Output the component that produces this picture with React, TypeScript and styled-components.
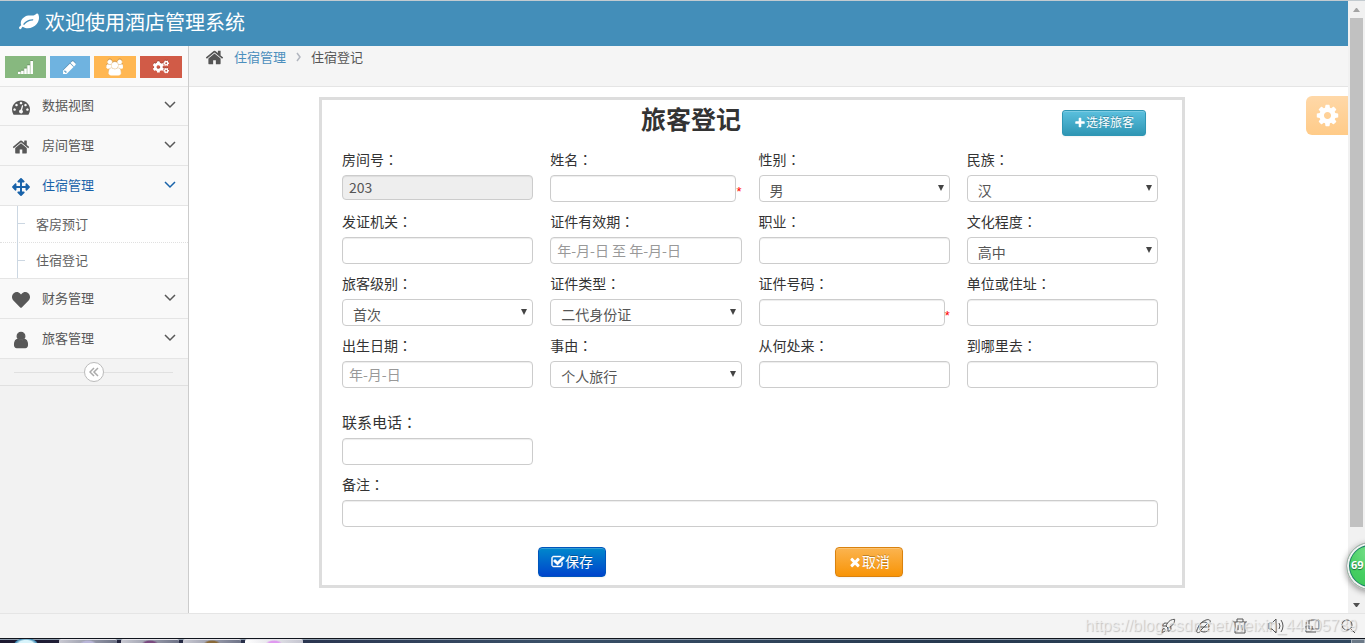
import React from "react";
import styled, { createGlobalStyle, css } from "styled-components";
import { FaCogs, FaArrowsAlt, FaHeart } from "react-icons/fa";
import { Rocket } from "lucide-react";

const sans = `"Noto Sans CJK SC", "Open Sans", sans-serif`;

const GlobalStyle = createGlobalStyle`
  *, *::before, *::after { box-sizing: border-box; }
  body {
    margin: 0;
    font-family: ${sans};
    font-size: 13px;
    line-height: 20px;
    color: #393939;
    background: #fff;
  }
  button, input, select { font-family: inherit; margin: 0; }
  a { text-decoration: none; }
  ul, ol { list-style: none; margin: 0; padding: 0; }
  svg { display: block; flex: none; }
`;

/* ---------- icons ---------- */

const paths = {
  leaf: "M1280 704q0-26-19-45t-45-19q-172 0-318 49.5t-259.5 134-235.5 219.5q-19 21-19 45 0 26 19 45t45 19q24 0 45-19 27-24 74-71t67-66q137-124 268.5-176t313.5-52q26 0 45-19t19-45zm512-198q0 95-20 193-46 224-184.5 383t-357.5 268q-214 108-438 108-148 0-286-47-15-5-88-42t-96-37q-16 0-39.5 32t-45 70-52.5 70-60 32q-43 0-63.5-17.5t-45.5-59.5q-2-4-6-11t-5.5-10-3-9.5-1.5-13.5q0-35 31-73.5t68-65.5 68-56 31-48q0-4-14-38t-16-44q-9-51-9-104 0-115 43.5-220t119-184.5 170.5-139 204-95.5q55-18 145-25.5t179.5-9 178.5-6 163.5-24 113.5-56.5l29.5-29.5 29.5-28 27-20 36.5-16 43.5-4.5q39 0 70.5 46t47.5 112 24 124 8 96z",
  home: "M1472 992v480q0 26-19 45t-45 19h-384v-384h-256v384h-384q-26 0-45-19t-19-45v-480q0-1 .5-3t.5-3l575-474 575 474q1 2 1 6zm223-69l-62 74q-8 9-21 11h-3q-13 0-21-7l-692-577-692 577q-12 8-24 7-13-2-21-11l-62-74q-8-10-7-23.5t11-21.5l719-599q32-26 76-26t76 26l244 204v-195q0-14 9-23t23-9h192q14 0 23 9t9 23v408l219 182q10 8 11 21.5t-7 23.5z",
  signal: "M0 1408h310v256h-310zM370 1280h310v384h-310zM740 1024h310v640h-310zM1110 640h310v1024h-310zM1480 128h310v1536h-310z",
  pencil: "M491 1536l91-91-235-235-91 91v107h128v128h107zM960 416l416 416-832 832h-416v-416zm683 96q0 53-37 90l-166 166-416-416 166-165q36-38 90-38 53 0 91 38l235 234q37 39 37 91z",
  group: "M657 896q-162 5-265 128h-134q-82 0-138-40.5t-56-118.5q0-353 124-353 6 0 43.5 21t97.5 42.5 119 21.5q67 0 133-23-5 37-5 66 0 139 81 256zm1071 637q0 120-73 189.5t-194 69.5h-874q-121 0-194-69.5t-73-189.5q0-53 3.5-103.5t14-109 26.5-108.5 43-97.5 62-81 85.5-53.5 111.5-20q10 0 43 21.5t73 48 107 48 135 21.5 135-21.5 107-48 73-48 43-21.5q61 0 111.5 20t85.5 53.5 62 81 43 97.5 26.5 108.5 14 109 3.5 103.5zm-1024-1277q0 106-75 181t-181 75-181-75-75-181 75-181 181-75 181 75 75 181zm704 384q0 159-112.5 271.5t-271.5 112.5-271.5-112.5-112.5-271.5 112.5-271.5 271.5-112.5 271.5 112.5 112.5 271.5zm576 225q0 78-56 118.5t-138 40.5h-134q-103-123-265-128 81-117 81-256 0-29-5-66 66 23 133 23 59 0 119-21.5t97.5-42.5 43.5-21q124 0 124 353zm-128-609q0 106-75 181t-181 75-181-75-75-181 75-181 181-75 181 75 75 181z",
  dashboard: "M384 1152q0-53-37.5-90.5t-90.5-37.5-90.5 37.5-37.5 90.5 37.5 90.5 90.5 37.5 90.5-37.5 37.5-90.5zm192-448q0-53-37.5-90.5t-90.5-37.5-90.5 37.5-37.5 90.5 37.5 90.5 90.5 37.5 90.5-37.5 37.5-90.5zm428 481l101-382q6-26-7.5-48.5t-38.5-29.5-48 6.5-30 39.5l-101 382q-60 5-107 43.5t-63 98.5q-20 77 20 146t117 89 146-20 89-117q16-60-6-117t-72-91zm660-33q0-53-37.5-90.5t-90.5-37.5-90.5 37.5-37.5 90.5 37.5 90.5 90.5 37.5 90.5-37.5 37.5-90.5zm-640-640q0-53-37.5-90.5t-90.5-37.5-90.5 37.5-37.5 90.5 37.5 90.5 90.5 37.5 90.5-37.5 37.5-90.5zm448 192q0-53-37.5-90.5t-90.5-37.5-90.5 37.5-37.5 90.5 37.5 90.5 90.5 37.5 90.5-37.5 37.5-90.5zm320 448q0 261-141 483-19 29-54 29h-1402q-35 0-54-29-141-221-141-483 0-182 71-348t191-286 286-191 348-71 348 71 286 191 191 286 71 348z",
  user: "M1536 1399q0 109-62.5 187t-150.5 78h-854q-88 0-150.5-78t-62.5-187q0-85 8.5-160.5t31.5-152 58.5-131 94-89 134.5-34.5q131 128 313 128t313-128q76 0 134.5 34.5t94 89 58.5 131 31.5 152 8.5 160.5zm-256-887q0 159-112.5 271.5t-271.5 112.5-271.5-112.5-112.5-271.5 112.5-271.5 271.5-112.5 271.5 112.5 112.5 271.5z",
  cog: "M1152 896q0-106-75-181t-181-75-181 75-75 181 75 181 181 75 181-75 75-181zm512-109v222q0 12-8 23t-20 13l-185 28q-19 54-39 91 35 50 107 138 10 12 10 25t-9 23q-27 37-99 108t-94 71q-12 0-26-9l-138-108q-44 23-91 38-16 136-29 186-7 28-36 28h-222q-14 0-24.5-8.5t-11.5-21.5l-28-184q-49-16-90-37l-141 107q-10 9-25 9-14 0-25-11-126-114-165-168-7-10-7-23 0-12 8-23 15-21 51-66.5t54-70.5q-27-50-41-99l-183-27q-13-2-21-12.5t-8-23.5v-222q0-12 8-23t19-13l186-28q14-46 39-92-40-57-107-138-10-12-10-24 0-10 9-23 26-36 98.5-107.5t94.5-71.5q13 0 26 10l138 107q44-23 91-38 16-136 29-186 7-28 36-28h222q14 0 24.5 8.5t11.5 21.5l28 184q49 16 90 37l142-107q9-9 24-9 13 0 25 10 129 119 165 170 7 8 7 22 0 12-8 23-15 21-51 66.5t-54 70.5q26 50 41 98l183 28q13 2 21 12.5t8 23.5z",
  check: "M1472 930v318q0 119-84.5 203.5t-203.5 84.5h-832q-119 0-203.5-84.5t-84.5-203.5v-832q0-119 84.5-203.5t203.5-84.5h832q63 0 117 25 15 7 18 23 3 17-9 29l-49 49q-10 10-23 10-3 0-9-2-23-6-45-6h-832q-66 0-113 47t-47 113v832q0 66 47 113t113 47h832q66 0 113-47t47-113v-254q0-13 9-22l64-64q10-10 23-10 6 0 12 3 20 8 20 29zm231-489l-814 814q-24 24-57 24t-57-24l-430-430q-24-24-24-57t24-57l110-110q24-24 57-24t57 24l263 263 647-647q24-24 57-24t57 24l110 110q24 24 24 57t-24 57z",
  plus: "M1600 736v192q0 40-28 68t-68 28h-416v416q0 40-28 68t-68 28h-192q-40 0-68-28t-28-68v-416h-416q-40 0-68-28t-28-68v-192q0-40 28-68t68-28h416v-416q0-40 28-68t68-28h192q40 0 68 28t28 68v416h416q40 0 68 28t28 68z",
  times: "M1490 1322q0 40-28 68l-136 136q-28 28-68 28t-68-28l-294-294-294 294q-28 28-68 28t-68-28l-136-136q-28-28-28-68t28-68l294-294-294-294q-28-28-28-68t28-68l136-136q28-28 68-28t68 28l294 294 294-294q28-28 68-28t68 28l136 136q28 28 28 68t-28 68l-294 294 294 294q28 28 28 68z",
};

type GlyphProps = { name: keyof typeof paths; size: number; box?: number; outline?: number };

function Glyph({ name, size, box = 1792, outline = 0 }: GlyphProps) {
  return (
    <svg
      width={size}
      height={size}
      viewBox={`0 0 ${box} 1792`}
      fill="currentColor"
      stroke={outline ? "currentColor" : "none"}
      strokeWidth={outline}
      aria-hidden="true"
    >
      <path d={paths[name]} />
    </svg>
  );
}

function Chevron({ d, width, height }: { d: string; width: number; height: number }) {
  return (
    <svg
      width={width}
      height={height}
      viewBox={`0 0 ${width} ${height}`}
      fill="none"
      stroke="currentColor"
      strokeWidth="1.5"
      aria-hidden="true"
    >
      <path d={d} />
    </svg>
  );
}

/* ---------- window frame ---------- */

const Screen = styled.div`
  position: relative;
  display: flex;
  flex-direction: column;
  min-height: 100vh;
  overflow: hidden;
  border-top: 1px solid #c3cbd0;
`;

const Viewport = styled.div`
  flex: 1;
  display: flex;
`;

const Site = styled.div`
  position: relative;
  flex: 1;
  display: flex;
  flex-direction: column;
`;

const ScrollTrack = styled.div`
  width: 17px;
  display: flex;
  flex-direction: column;
  align-items: center;
  background: #f1f1f1;
`;

const ScrollEnd = styled.div`
  height: 17px;
  display: flex;
  align-items: center;
`;

const ScrollSpace = styled.div`
  flex: 1;
  width: 13px;
`;

const ScrollThumb = styled.div`
  height: 88%;
  background: #c1c1c1;
`;

const Navbar = styled.header`
  height: 45px;
  display: flex;
  align-items: center;
  padding: 0 19px 4px;
  background: #438eb9;
`;

const Brand = styled.a`
  display: flex;
  align-items: center;
  gap: 6px;
  color: #fff;
  font-size: 20px;
  line-height: 30px;
`;

const Body = styled.div`
  flex: 1;
  display: flex;
`;

/* ---------- sidebar ---------- */

const Sidebar = styled.aside`
  width: 189px;
  border-right: 1px solid #ccc;
  background: #f2f2f2;
`;

const Shortcuts = styled.div`
  height: 40px;
  display: grid;
  grid-template-columns: 41fr 40fr 43fr 42fr;
  gap: 4px;
  align-items: center;
  padding: 2px 6px 0 5px;
  background: #fafafa;
`;

const Shortcut = styled.button<{ $color: string }>`
  height: 22px;
  display: flex;
  align-items: center;
  justify-content: center;
  padding: 0;
  border: 0;
  color: #fff;
  background: ${(p) => p.$color};
  svg { filter: drop-shadow(0 -1px 0 rgba(0, 0, 0, 0.2)); }
`;

const Menu = styled.ul`
  & > li:first-child > a { border-top: 1px solid #e5e5e5; }
`;

const MenuLink = styled.a<{ $active?: boolean }>`
  height: 40px;
  display: flex;
  align-items: center;
  padding: 0 12px 2px;
  border-bottom: 1px solid #e5e5e5;
  background: #f9f9f9;
  color: ${(p) => (p.$active ? "#1963aa" : "#585858")};
`;

const MenuIcon = styled.span`
  width: 18px;
  display: flex;
  justify-content: center;
  padding-top: 4px;
  margin-right: 12px;
`;

const MenuText = styled.span`
  flex: 1;
`;

const SubMenu = styled.ul`
  position: relative;
  background: #fff;
  border-bottom: 1px solid #e5e5e5;
  &::before {
    content: "";
    position: absolute;
    left: 17px;
    top: 0;
    bottom: 0;
    width: 1px;
    background: #ccd7e2;
  }
  li { height: 36px; }
  li + li { border-top: 1px dotted #e0e0e0; }
`;

const SubLink = styled.a`
  height: 100%;
  display: flex;
  align-items: center;
  padding-left: 18px;
  padding-bottom: 1px;
  color: #616161;
  &::before {
    content: "";
    width: 7px;
    height: 1px;
    margin-right: 11px;
    background: #ccd7e2;
  }
`;

const CollapseBar = styled.div`
  height: 27px;
  display: flex;
  align-items: center;
  padding: 0 15px 0 14px;
  border-bottom: 1px solid #e0e0e0;
  background: #f3f3f3;
  &::before, &::after {
    content: "";
    flex: 1;
    height: 1px;
    background: #e0e0e0;
  }
`;

const CollapseButton = styled.button`
  width: 20px;
  height: 20px;
  display: flex;
  align-items: center;
  justify-content: center;
  padding: 0;
  border: 1px solid #bbb;
  border-radius: 50%;
  color: #aaa;
  background: #fff;
`;

/* ---------- content ---------- */

const Content = styled.main`
  flex: 1;
  background: #fff;
`;

const Breadcrumb = styled.nav`
  height: 41px;
  padding: 1px 0 0 16px;
  border-bottom: 1px solid #e5e5e5;
  background: #f5f5f5;
  color: #555;
  ol, li {
    display: flex;
    align-items: center;
    gap: 10px;
  }
  a { color: #4c8fbd; }
`;

const Separator = styled.span`
  color: #b2b6bf;
`;

const SettingsButton = styled.button`
  position: absolute;
  top: 95px;
  right: 0;
  width: 42px;
  height: 39px;
  display: flex;
  align-items: center;
  justify-content: center;
  padding: 0;
  border: 0;
  border-radius: 6px 0 0 6px;
  color: #fff;
  background: linear-gradient(#ffd8a8, #ffcb88);
`;

const ContentArea = styled.div`
  padding: 10px 163px 20px 130px;
`;

const Panel = styled.form`
  padding: 0 24px 8px 20px;
  border: 3px solid #ddd;
`;

const PanelHeader = styled.div`
  height: 40px;
  display: flex;
  align-items: flex-start;
  gap: 22px;
  padding-right: 12px;
  margin-bottom: 10px;
`;

const PanelTitle = styled.h1`
  flex: 1;
  margin: 0;
  text-align: center;
  font-size: 25px;
  line-height: 36px;
  font-weight: 700;
  color: #333;
`;

const tones = {
  info: ["#5bc0de", "#2f96b4", "#2f96b4"],
  primary: ["#0088cc", "#0044cc", "#0055bb"],
  warning: ["#fbb450", "#f89406", "#d9820f"],
};

const Button = styled.button<{ $tone: keyof typeof tones; $small?: boolean }>`
  height: 30px;
  display: flex;
  align-items: center;
  justify-content: center;
  padding: 0 12px 2px;
  border: 1px solid ${(p) => tones[p.$tone][2]};
  border-radius: 4px;
  font-size: 14px;
  line-height: 20px;
  color: #fff;
  text-shadow: 0 -1px 0 rgba(0, 0, 0, 0.25);
  background: linear-gradient(${(p) => tones[p.$tone][0]}, ${(p) => tones[p.$tone][1]});
  box-shadow: inset 0 1px 0 rgba(255, 255, 255, 0.2), 0 1px 2px rgba(0, 0, 0, 0.05);
  svg { margin-top: 2px; }
  ${(p) =>
    p.$small &&
    css`
      height: 26px;
      padding: 0 11px 2px;
      margin-top: 10px;
      border-radius: 3px;
      font-size: 12px;
    `}
`;

const Fields = styled.div`
  display: grid;
  grid-template-columns: repeat(4, minmax(0, 1fr));
  gap: 10px 17px;
`;

const Field = styled.div<{ $wide?: boolean; $apart?: boolean }>`
  display: flex;
  flex-direction: column;
  gap: 7px;
  ${(p) => p.$wide && "grid-column: 1 / -1;"}
  ${(p) => p.$apart && "grid-column: 1 / 2; margin-top: 15px;"}
`;

const Label = styled.label<{ $large?: boolean }>`
  font-size: ${(p) => (p.$large ? 15 : 14)}px;
  line-height: 18px;
  color: #333;
`;

const Colon = styled.span`
  font-family: "Noto Sans CJK TC", sans-serif;
`;

const Control = styled.div`
  position: relative;
  display: flex;
  height: 27px;
`;

const inputBox = css`
  flex: 1;
  min-width: 0;
  width: 100%;
  border: 1px solid #ccc;
  border-radius: 4px;
  font-size: 14px;
  line-height: 20px;
  color: #555;
  background: #fff;
`;

const TextInput = styled.input`
  ${inputBox}
  height: 27px;
  padding: 0 6px 2px;
  box-shadow: inset 0 1px 1px rgba(0, 0, 0, 0.075);
  &::placeholder { color: #999; opacity: 1; }
  &:read-only {
    height: 25px;
    padding-bottom: 1px;
    background: #eee;
  }
`;

const SelectInput = styled.select`
  ${inputBox}
  appearance: none;
  padding: 2px 20px 0 10px;
`;

const SelectArrow = styled.svg`
  position: absolute;
  right: 6px;
  top: 10px;
  pointer-events: none;
`;

const Required = styled.span`
  align-self: flex-end;
  font-family: "Liberation Sans", sans-serif;
  font-size: 13px;
  color: #f00;
`;

const Actions = styled.div`
  display: flex;
  justify-content: center;
  gap: 229px;
  padding-right: 59px;
  margin-top: 20px;
`;

/* ---------- bottom bars ---------- */

const StatusBar = styled.footer`
  position: relative;
  height: 25px;
  display: flex;
  align-items: center;
  justify-content: flex-end;
  gap: 20px;
  padding-right: 9px;
  border-top: 1px solid #e5e5e5;
  background: #f4f4f4;
  color: #555;
`;

const ToolButton = styled.button`
  width: 16px;
  height: 16px;
  padding: 0;
  border: 0;
  color: inherit;
  background: none;
`;

const Watermark = styled.span`
  position: absolute;
  right: 8px;
  top: 2px;
  font-family: "Liberation Sans", sans-serif;
  font-size: 16px;
  color: rgba(244, 244, 244, 0.7);
  text-shadow: 1px 1px 1px rgba(0, 0, 0, 0.2);
  pointer-events: none;
`;

const Taskbar = styled.div`
  height: 5px;
  display: flex;
  gap: 4px;
  align-items: flex-end;
  border-top: 1px solid #10141c;
  background: linear-gradient(#8d9bab 0 1px, rgba(0, 0, 0, 0) 1px), linear-gradient(90deg, #1d1830, #2a3550 22%, #3a5068 40%, #26394f 70%, #31485f);
`;

const StartOrb = styled.div`
  width: 55px;
  height: 4px;
  background: radial-gradient(ellipse 12px 6px at 26px 5px, #d8f4fb 60%, #3c86b0 90%, transparent 100%);
`;

const TaskItem = styled.div<{ $tint: string; $light?: boolean }>`
  width: 58px;
  height: 4px;
  border-top: 1px solid #e4e4ea;
  border-radius: 2px 2px 0 0;
  background: radial-gradient(ellipse 8px 3px at 50% 100%, ${(p) => p.$tint} 60%, transparent 100%),
    ${(p) => (p.$light ? "linear-gradient(90deg, #fff, #c5c5d0)" : "linear-gradient(90deg, #c9c9d2, #6f7488)")};
`;

const ShowDesktop = styled.div`
  width: 14px;
  height: 4px;
  margin-left: auto;
  border: 1px solid #a9b3bd;
  border-bottom: 0;
  background: #6c7a88;
`;

const SpeedBall = styled.div`
  position: absolute;
  right: -29px;
  bottom: 53px;
  width: 48px;
  height: 48px;
  padding-left: 4px;
  border: 1px solid #b0b0b0;
  border-radius: 50%;
  font-family: "Open Sans", sans-serif;
  font-size: 11px;
  font-weight: 700;
  line-height: 44px;
  color: #fff;
  text-shadow: 0 1px 1px #1b6b3a;
  background: radial-gradient(circle at 50% 20%, #7be08c, #46cf62 50%, #3bc458);
  box-shadow: inset 0 0 0 2px #f2f2f2, inset 0 0 0 3px #1d8168, 0 2px 6px rgba(0, 0, 0, 0.4);
`;

/* ---------- data ---------- */

type FieldSpec = {
  id: string;
  label: string;
  options?: string[];
  value?: string;
  placeholder?: string;
  required?: boolean;
  wide?: boolean;
  apart?: boolean;
};

const fields: FieldSpec[] = [
  { id: "room", label: "房间号", value: "203" },
  { id: "name", label: "姓名", required: true },
  { id: "gender", label: "性别", options: ["男", "女"] },
  { id: "nation", label: "民族", options: ["汉"] },
  { id: "authority", label: "发证机关" },
  { id: "validity", label: "证件有效期", placeholder: "年-月-日 至 年-月-日" },
  { id: "job", label: "职业" },
  { id: "education", label: "文化程度", options: ["高中"] },
  { id: "level", label: "旅客级别", options: ["首次"] },
  { id: "idType", label: "证件类型", options: ["二代身份证"] },
  { id: "idNumber", label: "证件号码", required: true },
  { id: "address", label: "单位或住址" },
  { id: "birthday", label: "出生日期", placeholder: "年-月-日" },
  { id: "reason", label: "事由", options: ["个人旅行"] },
  { id: "from", label: "从何处来" },
  { id: "to", label: "到哪里去" },
  { id: "phone", label: "联系电话", apart: true },
  { id: "remark", label: "备注", wide: true },
];

const menu = [
  { text: "数据视图", icon: <Glyph name="dashboard" size={18} /> },
  { text: "房间管理", icon: <Glyph name="home" size={18} /> },
  { text: "住宿管理", icon: <FaArrowsAlt size={18} />, children: ["客房预订", "住宿登记"] },
  { text: "财务管理", icon: <FaHeart size={18} /> },
  { text: "旅客管理", icon: <Glyph name="user" size={18} outline={120} /> },
];

const toolPath = (d: string) => (
  <svg width="16" height="16" viewBox="0 0 16 16" fill="none" stroke="currentColor">
    <path d={d} />
  </svg>
);

const tools = [
  { name: "加速", icon: <Rocket size={16} strokeWidth={1.5} /> },
  { name: "浏览器", icon: toolPath("M4 9h9c0-3-2-5-5-5s-5 2-5 5 2 5 5 5c2 0 4-1 5-3M14 5c1-3-1-4-4-3-4 1-8 6-9 10-1 3 1 3 3 2M5 12l7-7") },
  { name: "清理", icon: toolPath("M1 4h14M5 4V1h6v3M3 4v11h10V4M6 7v5M10 7v5") },
  { name: "声音", icon: toolPath("M1 5h3l4-4v14l-4-4H1zM11 5q2 3 0 6M13 2q4 6 0 12") },
  { name: "窗口", icon: toolPath("M5 2h10v9H5zM2 4v10h10M8 8v3") },
  { name: "搜索", icon: toolPath("M7 2a5 5 0 1 0 0 10a5 5 0 1 0 0-10M11 11l4 4") },
];

function FormField({ spec }: { spec: FieldSpec }) {
  return (
    <Field $wide={spec.wide} $apart={spec.apart}>
      <Label htmlFor={spec.id} $large={spec.apart}>
        {spec.label}
        <Colon>：</Colon>
      </Label>
      <Control>
        {spec.options ? (
          <>
            <SelectInput id={spec.id}>
              {spec.options.map((o) => (
                <option key={o}>{o}</option>
              ))}
            </SelectInput>
            <SelectArrow width="6" height="6" viewBox="0 0 6 6" fill="#444" aria-hidden="true">
              <path d="M0 0h6L3 6z" />
            </SelectArrow>
          </>
        ) : (
          <TextInput
            id={spec.id}
            type="text"
            defaultValue={spec.value}
            placeholder={spec.placeholder}
            readOnly={Boolean(spec.value)}
          />
        )}
        {spec.required && <Required>*</Required>}
      </Control>
    </Field>
  );
}

export default function App() {
  return (
    <>
      <GlobalStyle />
      <Screen>
        <Viewport>
          <Site>
            <Navbar>
              <Brand href="#">
                <Glyph name="leaf" size={20} />
                欢迎使用酒店管理系统
              </Brand>
            </Navbar>
            <Body>
              <Sidebar>
                <Shortcuts>
                  <Shortcut $color="#87b87f" aria-label="统计"><Glyph name="signal" size={15} /></Shortcut>
                  <Shortcut $color="#6fb3e0" aria-label="编辑"><Glyph name="pencil" size={15} /></Shortcut>
                  <Shortcut $color="#ffb752" aria-label="用户"><Glyph name="group" size={17} box={1984} outline={60} /></Shortcut>
                  <Shortcut $color="#d15b47" aria-label="设置"><FaCogs size={16} /></Shortcut>
                </Shortcuts>
                <Menu>
                  {menu.map((m) => (
                    <li key={m.text}>
                      <MenuLink href="#" $active={Boolean(m.children)}>
                        <MenuIcon>{m.icon}</MenuIcon>
                        <MenuText>{m.text}</MenuText>
                        <Chevron d="M1 1l5 5 5-5" width={12} height={8} />
                      </MenuLink>
                      {m.children && (
                        <SubMenu>
                          {m.children.map((c) => (
                            <li key={c}><SubLink href="#">{c}</SubLink></li>
                          ))}
                        </SubMenu>
                      )}
                    </li>
                  ))}
                </Menu>
                <CollapseBar>
                  <CollapseButton aria-label="收起菜单">
                    <Chevron d="M5 1L1 5l4 4M9 1L5 5l4 4" width={10} height={10} />
                  </CollapseButton>
                </CollapseBar>
              </Sidebar>
              <Content>
                <Breadcrumb>
                  <ol>
                    <li>
                      <Glyph name="home" size={19} />
                      <a href="#">住宿管理</a>
                    </li>
                    <li>
                      <Separator><Chevron d="M1 1l3 4-3 4" width={5} height={10} /></Separator>
                      住宿登记
                    </li>
                  </ol>
                </Breadcrumb>
                <ContentArea>
                  <Panel onSubmit={(e) => e.preventDefault()}>
                    <PanelHeader>
                      <PanelTitle>旅客登记</PanelTitle>
                      <Button type="button" $tone="info" $small>
                        <Glyph name="plus" size={12} />
                        选择旅客
                      </Button>
                    </PanelHeader>
                    <Fields>
                      {fields.map((f) => (
                        <FormField key={f.id} spec={f} />
                      ))}
                    </Fields>
                    <Actions>
                      <Button type="submit" $tone="primary"><Glyph name="check" size={14} outline={60} />保存</Button>
                      <Button type="button" $tone="warning"><Glyph name="times" size={14} />取消</Button>
                    </Actions>
                  </Panel>
                </ContentArea>
              </Content>
            </Body>
            <SettingsButton aria-label="页面设置"><Glyph name="cog" size={25} /></SettingsButton>
          </Site>
          <ScrollTrack>
            <ScrollEnd>
              <svg width="7" height="4" viewBox="0 0 7 4" fill="#a3a3a3"><path d="M0 4L3 0h1l3 4z" /></svg>
            </ScrollEnd>
            <ScrollSpace><ScrollThumb /></ScrollSpace>
            <ScrollEnd>
              <svg width="7" height="4" viewBox="0 0 7 4" fill="#505050"><path d="M0 0h7L4 4H3z" /></svg>
            </ScrollEnd>
          </ScrollTrack>
        </Viewport>
        <StatusBar>
          {tools.map((t) => (
            <ToolButton key={t.name} aria-label={t.name}>{t.icon}</ToolButton>
          ))}
          <Watermark>https://blog.csdn.net/weixin_44505789</Watermark>
        </StatusBar>
        <Taskbar>
          <StartOrb />
          <TaskItem $tint="#b9b6d8" />
          <TaskItem $tint="#7a4a80" />
          <TaskItem $tint="#8a6a3a" />
          <TaskItem $tint="#e09af0" $light />
          <ShowDesktop />
        </Taskbar>
        <SpeedBall>69</SpeedBall>
      </Screen>
    </>
  );
}
